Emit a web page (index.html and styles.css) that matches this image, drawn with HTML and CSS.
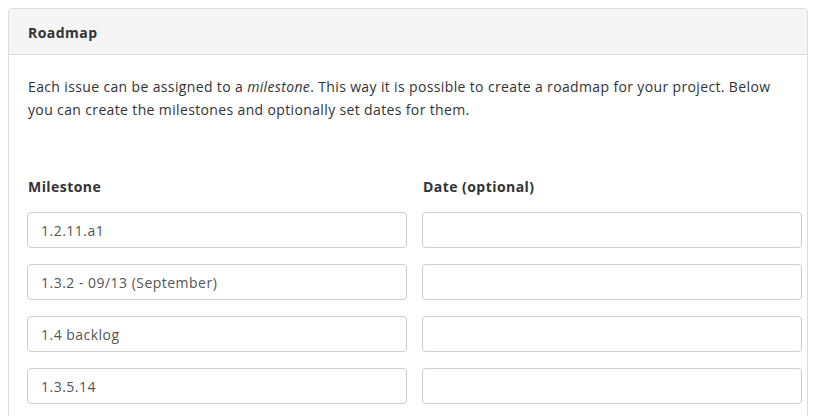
FILE: index.html
```html
<!DOCTYPE html>
<html>
<head>
<meta charset="utf-8">
<link rel="stylesheet" href="styles.css">
</head>
<body>
<div class="panel">
  <div class="panel-heading">Roadmap</div>
  <div class="panel-body">
    <p class="intro">Each issue can be assigned to a <em>milestone</em>. This way it is possible to create a roadmap for your project. Below you can create the milestones and optionally set dates for them.</p>
    <div class="grid">
      <div class="label">Milestone</div>
      <div class="label">Date (optional)</div>
      <div class="input">1.2.11.a1</div>
      <div class="input"></div>
      <div class="input">1.3.2 - 09/13 (September)</div>
      <div class="input"></div>
      <div class="input">1.4 backlog</div>
      <div class="input"></div>
      <div class="input">1.3.5.14</div>
      <div class="input"></div>
    </div>
  </div>
</div>
</body>
</html>
```
FILE: styles.css
```css
html, body {
  margin: 0;
  padding: 0;
  background: #fff;
}
body {
  padding: 8px;
  font-family: "Open Sans", "Liberation Sans", sans-serif;
  color: #333;
  font-size: 14px;
}
.panel {
  border: 1px solid #ddd;
  border-radius: 4px;
  height: 460px;
}
.panel-heading {
  background: #f5f5f5;
  border-bottom: 1px solid #ddd;
  border-radius: 4px 4px 0 0;
  height: 45px;
  line-height: 47px;
  padding-left: 19px;
  font-weight: bold;
  font-size: 14px;
  letter-spacing: 0.45px;
}
.panel-body {
  padding: 20px 5px 0 18px;
}
.intro {
  margin: 0 14px 0 1px;
  line-height: 23px;
  font-size: 14px;
  letter-spacing: 0.36px;
}
.grid {
  display: grid;
  grid-template-columns: 1fr 1fr;
  column-gap: 15px;
  row-gap: 16px;
  margin-top: 56px;
}
.label {
  font-weight: bold;
  font-size: 14px;
  letter-spacing: 0.45px;
  line-height: 20px;
  padding-left: 1px;
  margin-bottom: -1px;
}
.input {
  height: 34px;
  border: 1px solid #ccc;
  border-radius: 4px;
  line-height: 36px;
  padding-left: 13px;
  color: #555;
  font-size: 14px;
  letter-spacing: 0.48px;
}
```
